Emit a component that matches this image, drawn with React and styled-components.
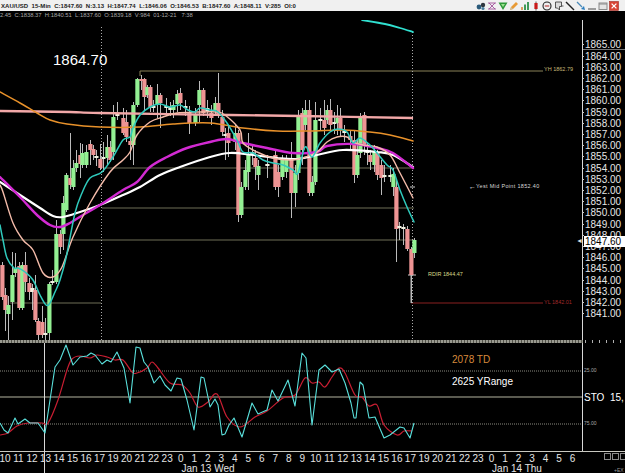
import React from 'react';
import styled, { createGlobalStyle } from 'styled-components';

const GlobalStyle = createGlobalStyle`
  html, body {
    margin: 0;
    padding: 0;
    background: #000;
  }
`;

const Window = styled.div`
  position: relative;
  width: 625px;
  height: 473px;
  background: #000;
  overflow: hidden;
  font-family: 'Liberation Sans', Arial, sans-serif;
`;

const TitleBar = styled.div`
  display: flex;
  align-items: center;
  justify-content: space-between;
  height: 11px;
  padding: 0 6px 0 1px;
  background: #f0f0f0;
`;

const Quote = styled.span`
  font-size: 6px;
  font-weight: bold;
  color: #222;
  white-space: pre;
  letter-spacing: 0.03px;
`;

const ToolIcons = styled.div`
  display: flex;
  gap: 1.1px;
`;

const InfoLine = styled.div`
  height: 9px;
  line-height: 9px;
  font-size: 5.85px;
  color: #a8a8a8;
  white-space: pre;
`;

const PriceRow = styled.div`
  display: flex;
  height: 320px;
`;

const Plot = styled.div`
  position: relative;
  width: 582px;
  height: ${(p) => p.$height}px;
`;

const ChartSvg = styled.svg`
  display: block;
  filter: blur(0.3px);
`;

const PriceAxis = styled.div`
  position: relative;
  flex: 1;
  padding-top: 19.4px;
  border-left: 1px solid #d8d8d8;
  box-sizing: border-box;
`;

const PriceLabel = styled.div`
  position: relative;
  height: 11.21px;
  line-height: 11.21px;
  padding-left: 2px;
  font-size: 10px;
  color: #e6e6e6;
  &::before {
    content: '';
    position: absolute;
    left: -1px;
    top: 5px;
    width: 2px;
    height: 1px;
    background: #c8c8c8;
  }
`;

const TopRule = styled.div`
  position: absolute;
  left: 0;
  right: 0;
  top: 29px;
  height: 1px;
  background: #777;
`;

const PriceTag = styled.div`
  position: absolute;
  left: 1px;
  right: 0;
  top: 216px;
  height: 11px;
  line-height: 11px;
  padding-left: 1px;
  background: #fff;
  color: #000;
  font-size: 10px;
`;

const Note = styled.span`
  position: absolute;
  left: ${(p) => p.$x}px;
  top: ${(p) => p.$y}px;
  font-size: ${(p) => p.$size || 5.5}px;
  line-height: 1;
  letter-spacing: ${(p) => p.$spacing || 0}px;
  color: ${(p) => p.$color || '#ddd'};
  white-space: pre;
`;

const SeparatorRow = styled.div`
  display: flex;
  height: 3px;
`;

const Separator = styled.div`
  width: 583px;
  background: repeating-linear-gradient(90deg, #9a9a90 0 2px, #55554c 2px 3px);
`;

const ScaleStub = styled.div`
  flex: 1;
  background: repeating-linear-gradient(90deg, #000 0 2px, #b0b0b0 2px 3px, #000 3px 7px);
`;

const IndicatorRow = styled.div`
  display: flex;
  height: 108px;
`;

const IndicatorScale = styled.div`
  position: relative;
  flex: 1;
  border-left: 1px solid #d8d8d8;
  box-sizing: border-box;
`;

const TimeAxis = styled.div`
  position: relative;
  height: 22px;
  border-top: 1px solid #c8c8c0;
  box-sizing: border-box;
`;

const HourRow = styled.div`
  display: grid;
  grid-template-columns: repeat(43, 13.52px);
  margin-left: -1.8px;
  padding-top: 1px;
  height: 11px;
  line-height: 11px;
  font-size: 10px;
  color: #e4e4e4;
  text-align: center;
`;

const DayLabel = styled.span`
  position: absolute;
  left: ${(p) => p.$center}px;
  top: 11px;
  transform: translateX(-50%);
  font-size: 10px;
  line-height: 11px;
  color: #e4e4e4;
  white-space: pre;
`;

const CursorLine = styled.div`
  position: absolute;
  left: 44px;
  top: -1px;
  bottom: 0;
  width: 1px;
  background: #d8d8d8;
`;

const PanelBoxes = styled.div`
  position: absolute;
  left: 604px;
  top: 1px;
  display: flex;
  gap: 1px;
`;

const PanelBox = styled.span`
  width: 5px;
  height: 5px;
  border: 1px solid #8a8a8a;
`;

const ToolIcon = ({ children }) => (
  <svg width="10" height="10" viewBox="0 0 10 10">
    {children}
  </svg>
);

const tools = [
  <g key="a"><circle cx="3" cy="6" r="2.4" fill="#2a5a7a" /><circle cx="7" cy="4" r="2.2" fill="#303840" /><circle cx="7" cy="7.5" r="1.6" fill="#4a80a0" /></g>,
  <g key="b" fill="none" stroke="#a0509a" strokeWidth="0.9"><path d="M1 2h8M1 8h8M2 2l6 6M8 2L2 8" /></g>,
  <g key="c"><path d="M0.5 1.5h9L5 9z" fill="#2f9a3a" /><path d="M3 3h4L5 6z" fill="#9be08f" /></g>,
  <g key="d"><path d="M1 9l1-3 5-5 2 2-5 5z" fill="#e89a35" /><path d="M1 9l1-3 2 2z" fill="#c8c0a0" /></g>,
  <g key="e"><rect x="1" y="6" width="2" height="3" fill="#d8a060" /><rect x="4" y="3.5" width="2" height="5.5" fill="#3f9a58" /><rect x="7" y="1" width="2" height="8" fill="#3f9a58" /></g>,
  <g key="f"><path d="M5 0.5v9" stroke="#333" strokeWidth="0.8" /><rect x="3.4" y="2" width="3.2" height="6" fill="#c81818" /></g>,
  <g key="g"><circle cx="5" cy="5" r="4" fill="#eee" stroke="#222" strokeWidth="1.1" /><path d="M2.8 5h4.4" stroke="#b02020" strokeWidth="1" /></g>,
  <g key="h"><path d="M1.5 1h6v4.5h-2v3.5L3.5 7H1.5z" fill="#ddd" stroke="#333" strokeWidth="0.8" /><path d="M7.5 5l2 0" stroke="#333" strokeWidth="0.8" /></g>,
  <path key="i" d="M1 1l8 8" stroke="#222" strokeWidth="1.5" />,
  <g key="j"><path d="M1 1l5 5" stroke="#4a8ab8" strokeWidth="1.2" /><path d="M5 8l4 1-1-4z" fill="#2d7fc0" /></g>,
  <path key="k" d="M1 8h8" stroke="#888" strokeWidth="1.6" />,
  <g key="l"><rect x="1" y="2" width="8" height="6.5" fill="#e4e4e4" stroke="#8a8a8a" /><path d="M1 3h8" stroke="#8a8a8a" strokeWidth="1" /></g>,
  <g key="m"><rect x="0.5" y="0.5" width="9" height="9" fill="#d84434" stroke="#a03028" strokeWidth="0.6" /><path d="M2.6 2.6l4.8 4.8M7.4 2.6L2.6 7.4" stroke="#fff" strokeWidth="1.3" /></g>,
];

// x, body top, body bottom, colour (g / p / w), wick top, wick bottom
const candles = [
  [2, 265, 297, 'p', 262, 300], [5, 295, 310, 'p', 288, 331], [8, 305, 314, 'g', 296, 340],
  [12, 275, 302, 'g', 252, 320], [15, 268, 273, 'g', 253, 277], [19, 266, 308, 'p', 262, 310],
  [22, 265, 308, 'g', 262, 310], [25, 265, 282, 'p', 252, 292], [29, 283, 292, 'p', 278, 300],
  [32, 288, 292, 'w', 284, 310], [35, 290, 320, 'p', 275, 322], [38, 321, 335, 'p', 318, 340],
  [42, 322, 335, 'p', 306, 338], [45, 333, 335, 'w', 318, 340], [49, 284, 333, 'g', 282, 340],
  [52, 281, 283, 'w', 270, 285], [56, 234, 282, 'g', 220, 284], [60, 234, 247, 'p', 230, 254],
  [63, 203, 234, 'g', 196, 250], [66, 175, 210, 'g', 173, 212], [70, 178, 185, 'p', 133, 189],
  [73, 168, 187, 'g', 160, 190], [76, 163, 168, 'g', 150, 172], [80, 155, 164, 'p', 143, 178],
  [82, 153, 165, 'g', 144, 168], [86, 152, 165, 'g', 145, 168], [90, 144, 150, 'p', 140, 165],
  [93, 149, 155, 'p', 145, 160], [96, 156, 158, 'w', 150, 166], [100, 159, 168, 'p', 144, 170],
  [103, 157, 159, 'w', 142, 172], [107, 147, 158, 'g', 135, 165], [110, 147, 160, 'p', 141, 162],
  [113, 117, 152, 'g', 105, 160], [117, 114, 116, 'w', 102, 120], [123, 118, 133, 'p', 108, 135],
  [126, 122, 137, 'p', 110, 142], [130, 141, 145, 'p', 125, 160], [133, 105, 145, 'g', 102, 165],
  [137, 79, 105, 'g', 78, 107], [141, 79, 81, 'p', 75, 90], [144, 79, 97, 'p', 78, 110],
  [147, 87, 95, 'g', 85, 98], [150, 87, 107, 'p', 85, 112], [153, 106, 108, 'w', 100, 112],
  [157, 95, 105, 'g', 84, 118], [160, 95, 103, 'p', 93, 128], [166, 106, 108, 'w', 98, 116],
  [170, 107, 110, 'w', 102, 116], [173, 105, 110, 'g', 100, 118], [177, 94, 104, 'g', 90, 112],
  [180, 93, 103, 'p', 88, 110], [185, 106, 108, 'w', 100, 116], [189, 112, 123, 'p', 106, 134],
  [195, 115, 123, 'g', 108, 126], [199, 90, 105, 'g', 81, 122], [203, 90, 113, 'p', 88, 116],
  [207, 108, 111, 'w', 100, 118], [211, 113, 118, 'p', 105, 125], [215, 103, 110, 'g', 97, 114],
  [218, 103, 115, 'p', 73, 118], [222, 117, 132, 'p', 110, 136], [225, 134, 136, 'w', 128, 160],
  [228, 133, 143, 'p', 125, 157], [235, 133, 142, 'g', 125, 150], [238, 133, 215, 'p', 130, 222],
  [241, 187, 215, 'g', 182, 218], [245, 170, 187, 'g', 160, 190], [248, 155, 172, 'g', 133, 190],
  [252, 152, 154, 'w', 145, 165], [255, 158, 167, 'p', 150, 180], [258, 166, 175, 'g', 160, 190],
  [267, 164, 166, 'w', 155, 178], [275, 155, 187, 'p', 150, 190], [278, 172, 187, 'p', 165, 197],
  [282, 160, 177, 'g', 155, 180], [286, 160, 172, 'g', 155, 178], [291, 160, 193, 'p', 142, 218],
  [295, 173, 193, 'g', 165, 207], [298, 115, 173, 'g', 110, 180], [302, 113, 150, 'p', 108, 165],
  [305, 110, 125, 'g', 100, 130], [309, 110, 193, 'p', 100, 196], [312, 182, 193, 'g', 176, 196],
  [315, 120, 182, 'g', 102, 185], [320, 119, 121, 'w', 108, 130], [324, 120, 128, 'p', 100, 135],
  [327, 110, 120, 'g', 105, 124], [330, 110, 125, 'p', 99, 130], [334, 122, 124, 'w', 112, 134],
  [337, 118, 123, 'g', 105, 135], [340, 118, 130, 'p', 108, 136], [344, 131, 133, 'w', 125, 142],
  [350, 136, 140, 'p', 130, 150], [354, 140, 175, 'p', 130, 183], [357, 155, 175, 'g', 140, 178],
  [360, 117, 153, 'g', 113, 158], [364, 115, 145, 'p', 112, 155], [367, 151, 153, 'w', 142, 165],
  [370, 155, 162, 'p', 150, 170], [374, 152, 165, 'g', 145, 172], [377, 153, 175, 'p', 150, 180],
  [381, 165, 178, 'p', 160, 195], [384, 175, 177, 'w', 165, 182], [390, 175, 177, 'w', 165, 182],
  [393, 174, 187, 'g', 168, 196], [396, 187, 229, 'p', 180, 262], [399, 226, 228, 'w', 222, 240],
  [403, 227, 229, 'w', 224, 245], [407, 229, 249, 'p', 226, 251], [411, 249, 275, 'p', 247, 303],
  [414, 240, 253, 'g', 238, 258],
];

const bodyColors = { g: '#93f093', p: '#ee9494', w: '#f0f0e0' };

const paths = {
  orange: [[0, 92], [20, 103], [37, 113], [50, 120], [67, 124], [100, 127], [140, 127], [173, 124], [210, 123], [243, 128], [277, 131], [310, 131], [343, 130], [370, 132], [390, 135], [413, 141]],
  salmon: [[0, 185], [3, 192], [13, 223], [23, 240], [33, 250], [43, 273], [53, 277], [62, 267], [73, 237], [90, 203], [110, 172], [123, 160], [130, 152], [137, 135], [150, 122], [163, 117], [177, 113], [197, 112], [217, 112], [225, 115], [240, 130], [243, 143], [257, 152], [273, 158], [290, 160], [303, 158], [317, 152], [327, 142], [337, 137], [347, 137], [353, 142], [363, 145], [377, 147], [390, 155], [400, 173], [413, 198]],
  magenta: [[0, 177], [20, 197], [37, 215], [50, 225], [60, 227], [70, 223], [83, 215], [100, 205], [123, 190], [137, 182], [150, 167], [167, 157], [187, 148], [210, 142], [227, 139], [243, 143], [267, 148], [293, 153], [317, 152], [327, 146], [353, 144], [377, 148], [393, 153], [413, 168]],
  white: [[0, 182], [20, 195], [40, 208], [53, 216], [63, 217], [80, 212], [100, 205], [123, 195], [140, 187], [160, 175], [180, 167], [210, 157], [230, 153], [253, 155], [277, 158], [297, 159], [317, 155], [343, 150], [377, 152], [393, 155], [413, 167]],
  teal: [[0, 225], [3, 240], [7, 258], [14, 268], [18, 268], [25, 272], [33, 280], [40, 295], [46, 305], [50, 303], [55, 292], [60, 280], [66, 258], [75, 213], [82, 193], [90, 178], [102, 172], [113, 157], [123, 140], [130, 137], [133, 128], [140, 115], [150, 107], [160, 104], [170, 107], [180, 105], [188, 110], [195, 112], [200, 108], [210, 110], [218, 112], [227, 123], [237, 140], [243, 152], [253, 153], [263, 160], [273, 163], [283, 165], [293, 170], [298, 173], [305, 147], [312, 157], [320, 143], [330, 132], [338, 129], [347, 132], [353, 143], [360, 138], [370, 145], [377, 153], [387, 165], [393, 170], [400, 190], [407, 207], [414, 222]],
  ridge: [[0, 111], [70, 112], [100, 113], [230, 115], [300, 116], [412, 118]],
  topTeal: [[362, 20], [385, 24], [400, 28], [413, 32]],
};

const stoFast = [[0, 423], [4, 430], [8, 433], [15, 418], [18, 424], [25, 419], [30, 423], [38, 423], [45, 433], [50, 400], [55, 367], [60, 360], [66, 345], [73, 365], [80, 357], [87, 356], [91, 353], [95, 355], [102, 364], [107, 360], [111, 362], [117, 352], [124, 368], [130, 403], [136, 347], [140, 348], [144, 362], [148, 367], [154, 383], [160, 376], [165, 385], [171, 391], [177, 378], [181, 379], [187, 400], [194, 430], [201, 377], [204, 378], [210, 407], [215, 399], [218, 405], [222, 435], [225, 434], [229, 425], [234, 418], [242, 437], [252, 403], [258, 414], [267, 410], [272, 390], [278, 401], [288, 380], [295, 406], [302, 353], [306, 358], [312, 425], [319, 370], [325, 365], [332, 372], [339, 369], [345, 383], [351, 403], [354, 418], [356, 418], [360, 382], [363, 385], [369, 418], [375, 417], [384, 438], [390, 435], [400, 427], [404, 428], [410, 438], [414, 423]];

const stoSlow = [[0, 435], [8, 433], [17, 426], [28, 423], [42, 423], [48, 423], [58, 400], [67, 370], [72, 359], [80, 356], [90, 358], [97, 355], [107, 357], [115, 360], [123, 360], [132, 372], [137, 373], [147, 368], [152, 362], [158, 368], [170, 383], [182, 385], [190, 393], [198, 407], [208, 402], [217, 394], [227, 417], [240, 427], [255, 417], [267, 411], [283, 398], [295, 395], [305, 378], [312, 383], [319, 382], [325, 387], [332, 377], [339, 368], [345, 373], [355, 395], [362, 397], [369, 406], [377, 405], [384, 425], [397, 435], [404, 431], [412, 431]];

const toPath = (pts) => 'M' + pts.map((p) => p.join(' ')).join('L');

// catmull-rom through the points, for the moving averages
const smooth = (pts) => {
  let d = `M${pts[0][0]} ${pts[0][1]}`;
  for (let i = 0; i < pts.length - 1; i++) {
    const p0 = pts[i - 1] || pts[i];
    const p1 = pts[i];
    const p2 = pts[i + 1];
    const p3 = pts[i + 2] || p2;
    const c1x = p1[0] + (p2[0] - p0[0]) / 6;
    const c1y = p1[1] + (p2[1] - p0[1]) / 6;
    const c2x = p2[0] - (p3[0] - p1[0]) / 6;
    const c2y = p2[1] - (p3[1] - p1[1]) / 6;
    d += `C${c1x} ${c1y} ${c2x} ${c2y} ${p2[0]} ${p2[1]}`;
  }
  return d;
};

const prices = Array.from({ length: 25 }, (_, i) => (1865 - i).toFixed(2));
const hours = [10, 11, 12, 13, 14, 15, 16, 17, 19, 20, 21, 22, 23, 0, 1, 2, 3, 4, 5, 6, 7, 8, 9, 10, 11, 12, 13, 14, 15, 16, 17, 19, 20, 21, 22, 23, 0, 1, 2, 3, 4, 5, 6];

const PriceChart = () => (
  <ChartSvg width="582" height="320" viewBox="0 20 582 320">
    <path d="M140 71H543M140 71V76" stroke="#8a8258" strokeWidth="1" fill="none" />
    <path d="M104 168H414M102 208H414M0 240H414M10 303H101" stroke="#6f6e56" strokeWidth="1" />
    <path d="M411 303H543" stroke="#8a2020" strokeWidth="1" />
    <path d="M411 275V303" stroke="#bbb" strokeWidth="1" />
    <path d="M408 275H416M410 187H415" stroke="#ccc" strokeWidth="1" />
    <path d="M101.5 27V340M412.5 32V340" stroke="#aaa" strokeWidth="1" strokeDasharray="1 2" />
    {candles.map(([x, top, bottom, c, wickTop, wickBottom]) => (
      <g key={x}>
        <path d={`M${x + 0.5} ${wickTop}V${wickBottom}`} stroke="#bbb" strokeWidth="1" />
        <rect x={x - 1.7} y={top} width="4.2" height={bottom - top} fill={bodyColors[c]} />
      </g>
    ))}
    <g fill="none" strokeLinejoin="round" strokeLinecap="round">
      <path d={smooth(paths.ridge)} stroke="#f2a8a8" strokeWidth="2.4" />
      <path d={smooth(paths.orange)} stroke="#e8912a" strokeWidth="1.5" />
      <path d={smooth(paths.white)} stroke="#fff" strokeWidth="2.2" />
      <path d={smooth(paths.magenta)} stroke="#d22ad2" strokeWidth="2.4" />
      <path d={smooth(paths.salmon)} stroke="#f5bcaa" strokeWidth="1.4" />
      <path d={smooth(paths.teal)} stroke="#2fcabc" strokeWidth="1.5" />
      <path d={smooth(paths.topTeal)} stroke="#30e0d0" strokeWidth="1.8" />
    </g>
  </ChartSvg>
);

const StoChart = () => (
  <ChartSvg width="582" height="108" viewBox="0 343 582 108">
    <path d="M0 371H582M0 424H582" stroke="#8a8a80" strokeWidth="1" strokeDasharray="1 1" />
    <path d="M0 397H582" stroke="#b4b4a0" strokeWidth="1" />
    <path d="M44.5 343V451" stroke="#d8d8d8" strokeWidth="1" />
    <g fill="none" strokeLinejoin="round">
      <path d={smooth(stoSlow)} stroke="#c81e32" strokeWidth="1.2" />
      <path d={toPath(stoFast)} stroke="#5ae0dc" strokeWidth="1.1" />
    </g>
  </ChartSvg>
);

const App = () => (
  <Window>
    <GlobalStyle />
    <TitleBar>
      <Quote>{'XAU/USD  15-Min  C:1847.60  N:3.13  H:1847.74  L:1846.06  O:1846.53  B:1847.60  A:1848.11  V:285  OI:0'}</Quote>
      <ToolIcons>
        {tools.map((icon) => (
          <ToolIcon key={icon.key}>{icon}</ToolIcon>
        ))}
      </ToolIcons>
    </TitleBar>
    <InfoLine>{'2.45  C:1838.37  H:1840.51  L:1837.60  O:1839.18  V:984  01-12-21   7:38'}</InfoLine>
    <PriceRow>
      <Plot $height={320}>
        <PriceChart />
        <Note $x={53} $y={32} $size={15} $color="#fff">1864.70</Note>
        <Note $x={544} $y={47} $color="#c8b878">YH 1862.79</Note>
        <Note $x={469} $y={163} $size={7} $color="#fff">←</Note>
        <Note $x={476} $y={164} $color="#d8d8d8" $spacing={0.33}>Yest Mid Point 1852.40</Note>
        <Note $x={428} $y={252} $color="#d8d88a">RDIR 1844.47</Note>
        <Note $x={544} $y={280} $color="#a02a2a">YL 1842.01</Note>
        <Note $x={576} $y={217} $size={7} $color="#ddd">◄</Note>
      </Plot>
      <PriceAxis>
        <TopRule />
        {prices.map((price) => (
          <PriceLabel key={price}>{price}</PriceLabel>
        ))}
        <PriceTag>1847.60</PriceTag>
      </PriceAxis>
    </PriceRow>
    <SeparatorRow>
      <Separator />
      <ScaleStub />
    </SeparatorRow>
    <IndicatorRow>
      <Plot $height={108}>
        <StoChart />
        <Note $x={452} $y={12} $size={10} $color="#d88a3c">2078 TD</Note>
        <Note $x={452} $y={34} $size={10} $color="#fff">2625 YRange</Note>
      </Plot>
      <IndicatorScale>
        <Note $x={1} $y={25} $size={5} $color="#aaa">25.00</Note>
        <Note $x={1} $y={78} $size={5} $color="#aaa">75.00</Note>
        <Note $x={1} $y={50} $size={10} $color="#fff">{'STO  15,'}</Note>
      </IndicatorScale>
    </IndicatorRow>
    <TimeAxis>
      <CursorLine />
      <HourRow>
        {hours.map((hour, i) => (
          <span key={i}>{hour}</span>
        ))}
      </HourRow>
      <DayLabel $center={208}>Jan 13 Wed</DayLabel>
      <DayLabel $center={517}>Jan 14 Thu</DayLabel>
      <PanelBoxes>
        <PanelBox />
        <PanelBox />
        <PanelBox />
      </PanelBoxes>
      <Note $x={614} $y={16} $size={5} $color="#999">+EX</Note>
    </TimeAxis>
  </Window>
);

export default App;
